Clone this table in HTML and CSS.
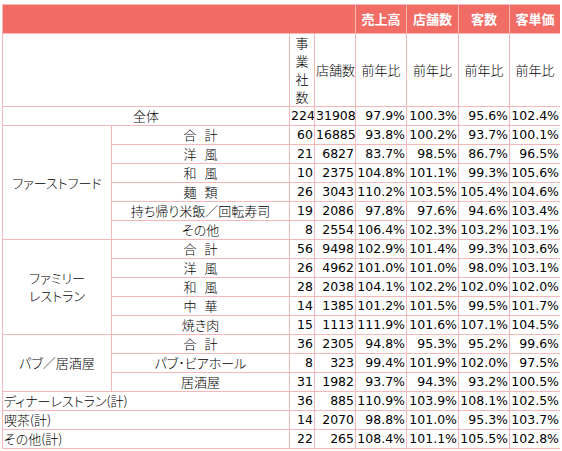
FILE: index.html
```html
<!DOCTYPE html>
<html lang="ja">
<head>
<meta charset="utf-8">
<link rel="stylesheet" href="styles.css">
</head>
<body>
<table class="tbl">
<colgroup>
<col class="c-cat"><col class="c-sub"><col class="c-co"><col class="c-st"><col class="c-p1"><col class="c-p2"><col class="c-p3"><col class="c-p4">
</colgroup>
<tr class="h1">
<th colspan="4"></th><th>売上高</th><th>店舗数</th><th>客数</th><th>客単価</th>
</tr>
<tr class="h2">
<td colspan="2"></td><td class="vert jp">事業社数</td><td class="jp">店舗数</td><td class="jp">前年比</td><td class="jp">前年比</td><td class="jp">前年比</td><td class="jp">前年比</td>
</tr>
<tr><td colspan="2" class="jp c">全体</td><td class="n">224</td><td class="n">31908</td><td class="n">97.9%</td><td class="n">100.3%</td><td class="n">95.6%</td><td class="n">102.4%</td></tr>
<tr><td rowspan="6" class="jp c">ファーストフード</td><td class="jp c"><span class="sp">合 計</span></td><td class="n">60</td><td class="n">16885</td><td class="n">93.8%</td><td class="n">100.2%</td><td class="n">93.7%</td><td class="n">100.1%</td></tr>
<tr><td class="jp c"><span class="sp">洋 風</span></td><td class="n">21</td><td class="n">6827</td><td class="n">83.7%</td><td class="n">98.5%</td><td class="n">86.7%</td><td class="n">96.5%</td></tr>
<tr><td class="jp c"><span class="sp">和 風</span></td><td class="n">10</td><td class="n">2375</td><td class="n">104.8%</td><td class="n">101.1%</td><td class="n">99.3%</td><td class="n">105.6%</td></tr>
<tr><td class="jp c"><span class="sp">麺 類</span></td><td class="n">26</td><td class="n">3043</td><td class="n">110.2%</td><td class="n">103.5%</td><td class="n">105.4%</td><td class="n">104.6%</td></tr>
<tr><td class="jp c">持ち帰り米飯／回転寿司</td><td class="n">19</td><td class="n">2086</td><td class="n">97.8%</td><td class="n">97.6%</td><td class="n">94.6%</td><td class="n">103.4%</td></tr>
<tr><td class="jp c">その他</td><td class="n">8</td><td class="n">2554</td><td class="n">106.4%</td><td class="n">102.3%</td><td class="n">103.2%</td><td class="n">103.1%</td></tr>
<tr><td rowspan="5" class="jp c">ファミリー<br>レストラン</td><td class="jp c"><span class="sp">合 計</span></td><td class="n">56</td><td class="n">9498</td><td class="n">102.9%</td><td class="n">101.4%</td><td class="n">99.3%</td><td class="n">103.6%</td></tr>
<tr><td class="jp c"><span class="sp">洋 風</span></td><td class="n">26</td><td class="n">4962</td><td class="n">101.0%</td><td class="n">101.0%</td><td class="n">98.0%</td><td class="n">103.1%</td></tr>
<tr><td class="jp c"><span class="sp">和 風</span></td><td class="n">28</td><td class="n">2038</td><td class="n">104.1%</td><td class="n">102.2%</td><td class="n">102.0%</td><td class="n">102.0%</td></tr>
<tr><td class="jp c"><span class="sp">中 華</span></td><td class="n">14</td><td class="n">1385</td><td class="n">101.2%</td><td class="n">101.5%</td><td class="n">99.5%</td><td class="n">101.7%</td></tr>
<tr><td class="jp c">焼き肉</td><td class="n">15</td><td class="n">1113</td><td class="n">111.9%</td><td class="n">101.6%</td><td class="n">107.1%</td><td class="n">104.5%</td></tr>
<tr><td rowspan="3" class="jp c">パブ／居酒屋</td><td class="jp c"><span class="sp">合 計</span></td><td class="n">36</td><td class="n">2305</td><td class="n">94.8%</td><td class="n">95.3%</td><td class="n">95.2%</td><td class="n">99.6%</td></tr>
<tr><td class="jp c">パブ･ビアホール</td><td class="n">8</td><td class="n">323</td><td class="n">99.4%</td><td class="n">101.9%</td><td class="n">102.0%</td><td class="n">97.5%</td></tr>
<tr><td class="jp c">居酒屋</td><td class="n">31</td><td class="n">1982</td><td class="n">93.7%</td><td class="n">94.3%</td><td class="n">93.2%</td><td class="n">100.5%</td></tr>
<tr><td colspan="2" class="jp">ディナーレストラン(計)</td><td class="n">36</td><td class="n">885</td><td class="n">110.9%</td><td class="n">103.9%</td><td class="n">108.1%</td><td class="n">102.5%</td></tr>
<tr><td colspan="2" class="jp">喫茶(計)</td><td class="n">14</td><td class="n">2070</td><td class="n">98.8%</td><td class="n">101.0%</td><td class="n">95.3%</td><td class="n">103.7%</td></tr>
<tr><td colspan="2" class="jp">その他(計)</td><td class="n">22</td><td class="n">265</td><td class="n">108.4%</td><td class="n">101.1%</td><td class="n">105.5%</td><td class="n">102.8%</td></tr>
</table>
</body>
</html>
```
FILE: styles.css
```css
html, body { background: #fff; }
body { margin: 4px 2px; }
.tbl {
  border-collapse: collapse;
  table-layout: fixed;
  width: 558px;
  color: #000;
  font-family: "Noto Sans CJK JP", sans-serif;
  font-size: 13px;
  font-feature-settings: "palt";
}
.c-cat { width: 109px; }
.c-sub { width: 178px; }
.c-co { width: 25px; }
.c-st { width: 41px; }
.c-p1 { width: 51px; }
.c-p2 { width: 52px; }
.c-p3 { width: 51px; }
.c-p4 { width: 51px; }
.tbl th, .tbl td {
  border: 1px solid #f5b7b7;
  padding: 0 1px;
  height: 18px;
  line-height: 18px;
  white-space: nowrap;
  overflow: hidden;
}
.h1 th {
  background: #f26c66;
  color: #fff;
  font-weight: bold;
  height: 28px;
  line-height: 28px;
  text-align: center;
}
.h2 td {
  height: 72px;
  text-align: center;
  vertical-align: middle;
}
.h2 .vert {
  white-space: normal;
  word-break: break-all;
  line-height: 18px;
  padding: 0;
}
.c { text-align: center; }
.jp { font-family: "Noto Sans CJK JP", sans-serif; font-weight: 300; }
.sp { word-spacing: 5px; }
.n {
  font-family: "DejaVu Sans", sans-serif;
  font-size: 12.5px;
  text-align: right;
  font-feature-settings: normal;
}
```
